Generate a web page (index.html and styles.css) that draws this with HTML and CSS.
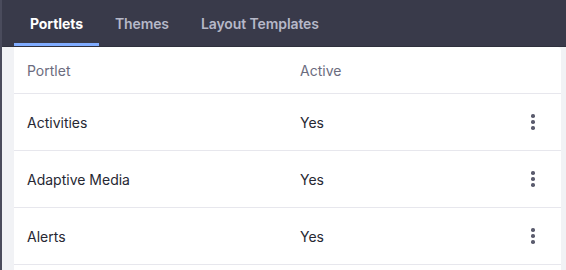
FILE: index.html
```html
<!DOCTYPE html>
<html lang="en">
<head>
  <meta charset="UTF-8">
  <meta name="viewport" content="width=device-width, initial-scale=1.0">
  <title>Portlets</title>
  <link rel="stylesheet" href="styles.css">
</head>
<body>
  <div class="page">
    <nav class="tabs">
      <a class="tab active" href="#">Portlets</a>
      <a class="tab" href="#">Themes</a>
      <a class="tab" href="#">Layout Templates</a>
    </nav>

    <div class="content">
      <div class="card">
        <div class="row head">
          <div class="col name">Portlet</div>
          <div class="col active-col">Active</div>
          <div class="col actions"></div>
        </div>

        <div class="row">
          <div class="col name">Activities</div>
          <div class="col active-col">Yes</div>
          <div class="col actions"><span class="kebab"><i></i><i></i><i></i></span></div>
        </div>

        <div class="row">
          <div class="col name">Adaptive Media</div>
          <div class="col active-col">Yes</div>
          <div class="col actions"><span class="kebab"><i></i><i></i><i></i></span></div>
        </div>

        <div class="row">
          <div class="col name">Alerts</div>
          <div class="col active-col">Yes</div>
          <div class="col actions"><span class="kebab"><i></i><i></i><i></i></span></div>
        </div>

        <div class="row empty"></div>
      </div>
    </div>
  </div>
</body>
</html>
```

FILE: styles.css
```css
* {
  margin: 0;
  padding: 0;
  box-sizing: border-box;
}

body {
  font-family: 'Inter', 'Noto Sans', sans-serif;
  background-color: #f1f2f5;
  color: #272833;
  height: 270px;
  overflow: hidden;
}

.page {
  border-left: 2px solid #4a4b5c;
  min-height: 270px;
}

/* tabs */
.tabs {
  display: flex;
  background-color: #393a4a;
  height: 47px;
  padding-left: 12px;
  border-bottom: 1px solid #2f303d;
}

.tab {
  display: flex;
  align-items: center;
  padding: 3px 16px 0;
  color: #b6b8c8;
  font-size: 14px;
  font-weight: 600;
  letter-spacing: -0.1px;
  text-decoration: none;
  border-bottom: 3px solid transparent;
}

.tab.active {
  color: #fff;
  font-weight: 700;
  border-bottom-color: #80acff;
}

/* table card */
.content {
  padding: 0 5px 0 12px;
}

.card {
  background-color: #fff;
  border-radius: 0 4px 0 0;
}

.row {
  display: flex;
  align-items: center;
  height: 57px;
  border-bottom: 1px solid #e7e7ed;
  font-size: 14px;
  color: #272833;
}

.row.head {
  height: 47px;
  color: #6b6c7e;
}

.row.empty {
  border-bottom: none;
}

.col.name {
  padding-left: 13px;
  width: 286px;
}

.col.active-col {
  flex: 1;
}

.col.actions {
  width: 56px;
  display: flex;
  justify-content: center;
}

.kebab {
  display: flex;
  flex-direction: column;
  gap: 2.5px;
}

.kebab i {
  display: block;
  width: 3.5px;
  height: 3.5px;
  border-radius: 50%;
  background-color: #5b5c6e;
}
```
